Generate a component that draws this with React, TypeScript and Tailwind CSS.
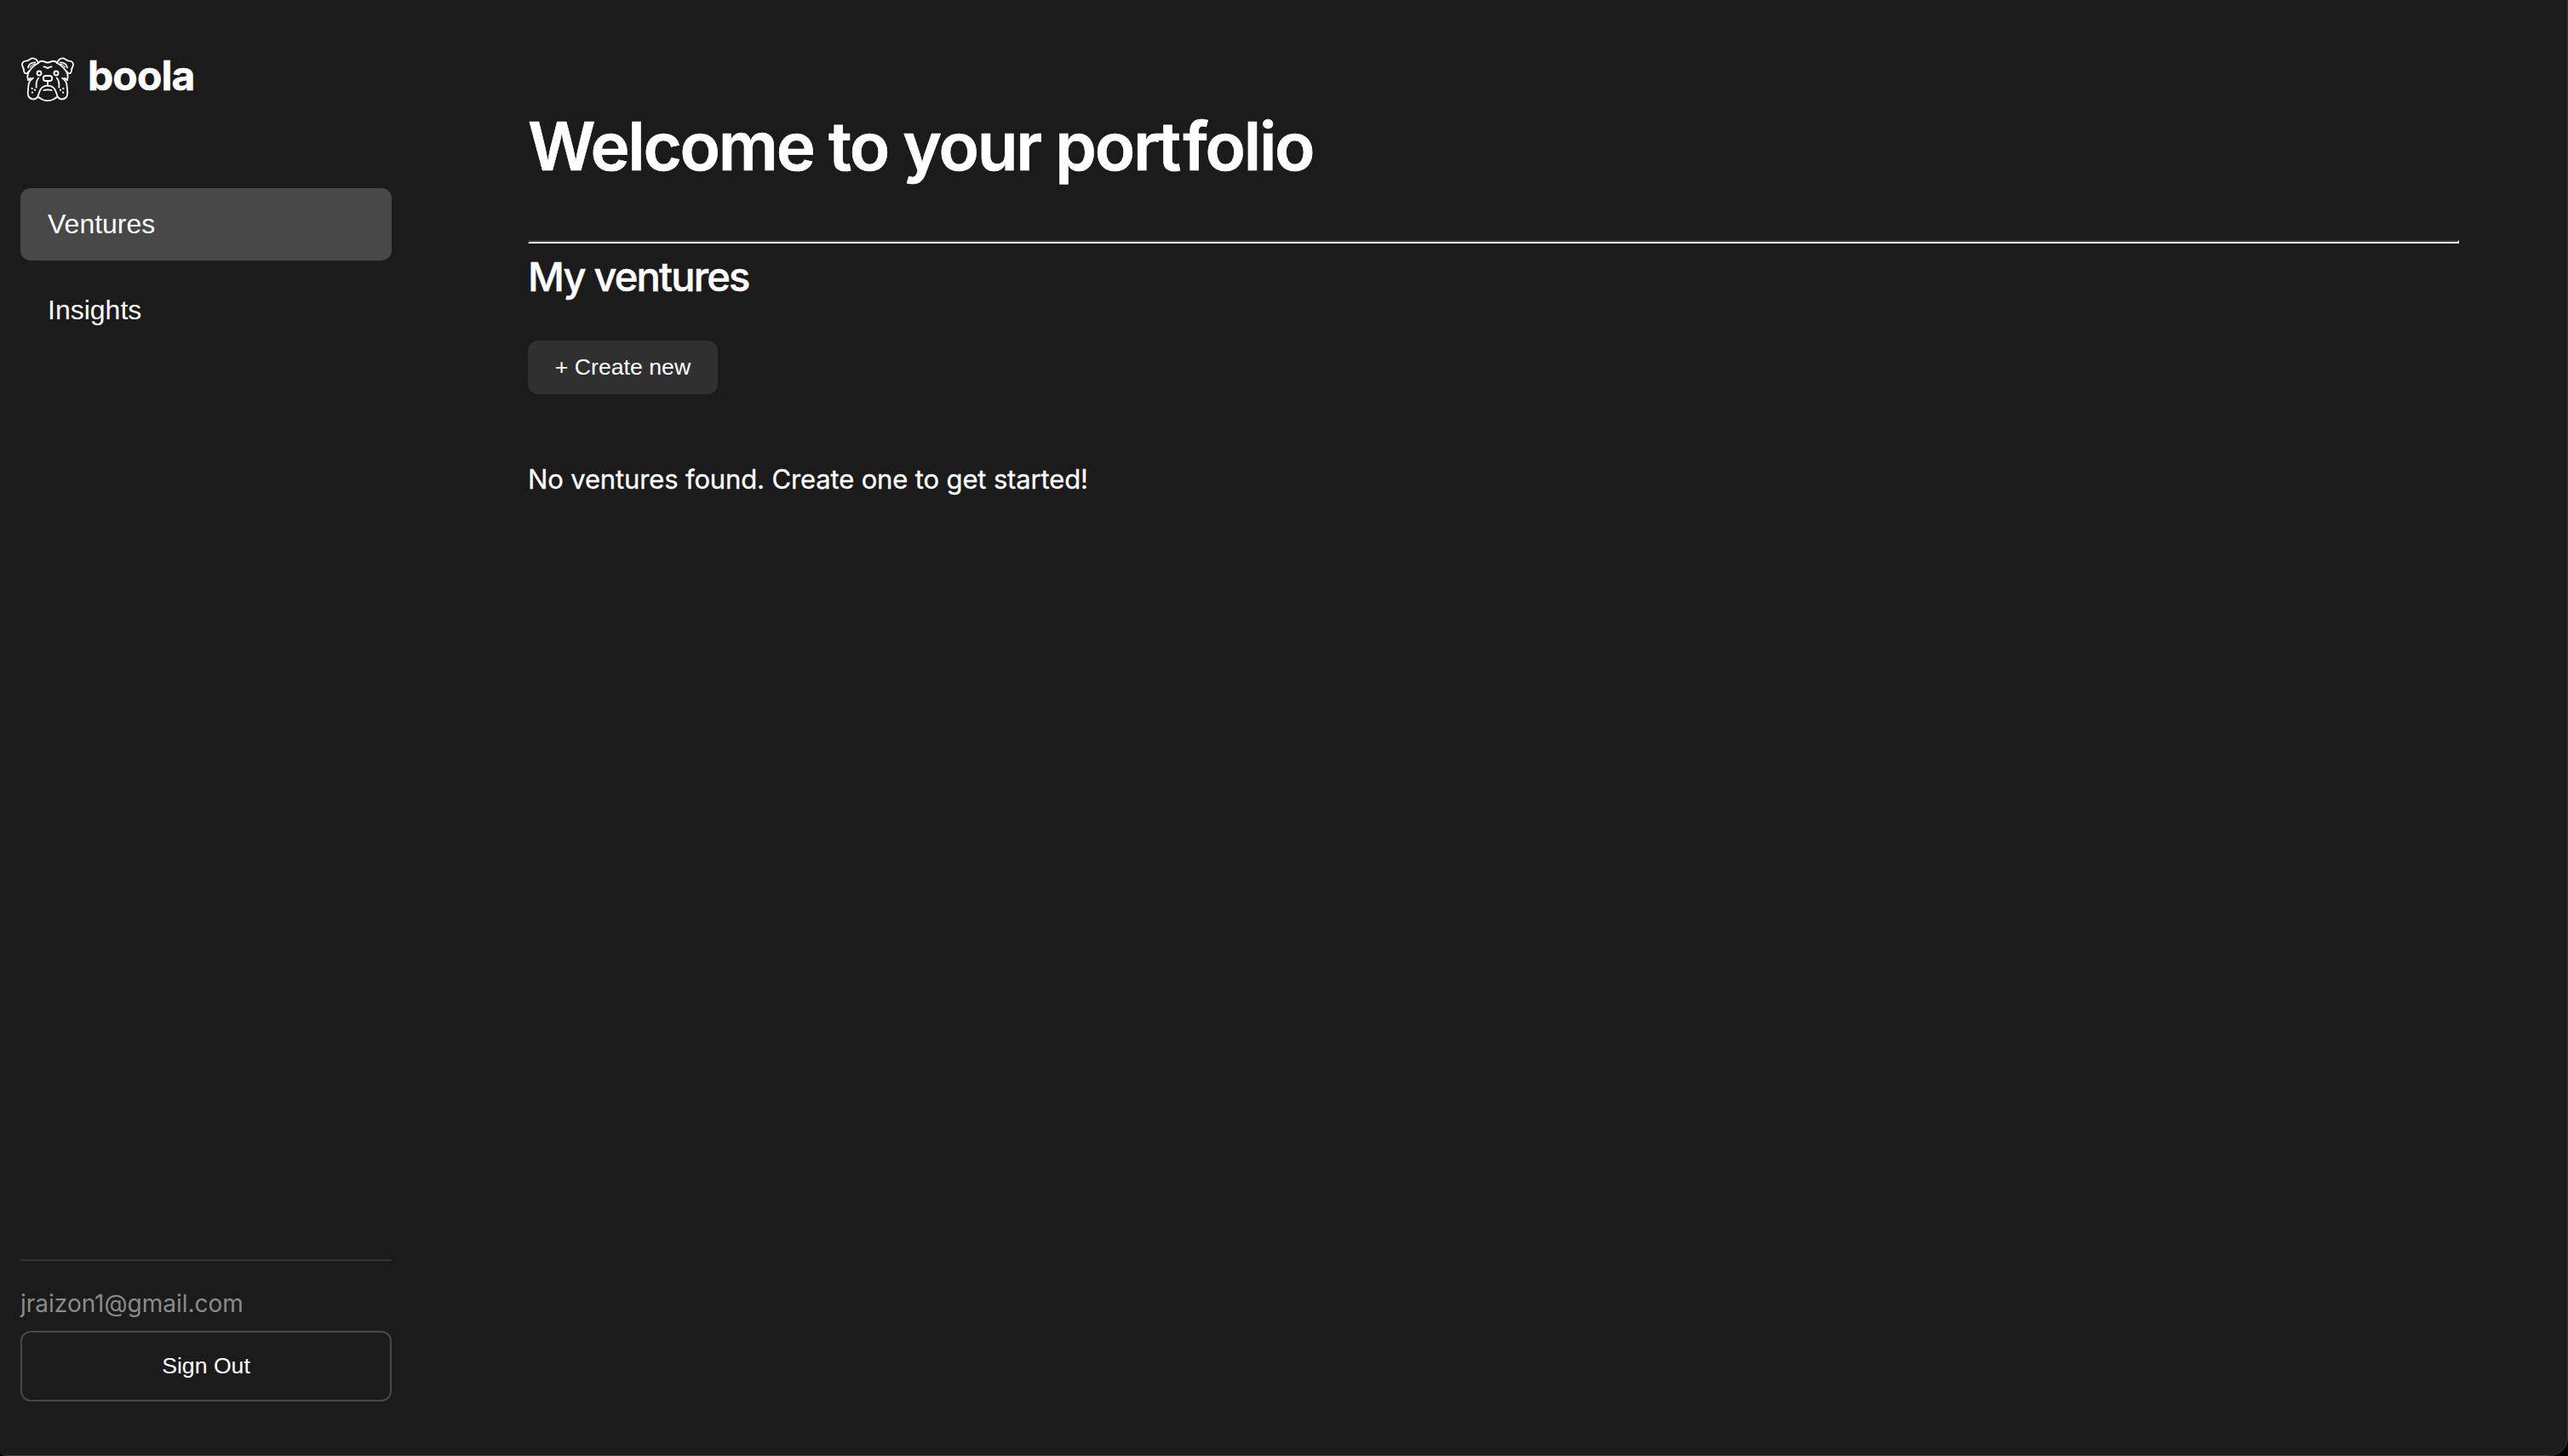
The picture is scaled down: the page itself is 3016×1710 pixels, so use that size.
function Bulldog() {
  return (
    <svg
      viewBox="0 0 240 216"
      className="h-[72px] w-20 shrink-0"
      fill="none"
      stroke="white"
      strokeWidth="5.4"
      strokeLinecap="round"
      strokeLinejoin="round"
    >
      {/* skull */}
      <path d="M87 53C94 46 104 47 110 50Q120 55 130 50C136 47 146 46 153 53" />
      {/* one half of the face, mirrored for the other */}
      {[undefined, "translate(240 0) scale(-1 1)"].map((t, i) => (
        <g key={i} transform={t}>
          <path d="M87 54C84 44 75 36 66 37C58 38 55 44 48 46C40 46 31 50 30 58C29 66 36 71 36 79C36 86 39 91 44 91C49 91 51 84 56 81" />
          <path d="M87 54C72 62 56 76 50 94Q47 102 51 114" />
          <path d="M51 70Q54 52 76 52" />
          <path d="M58 69Q64 59 78 57" strokeWidth="3.4" />
          <path d="M69 107Q52 116 52 138C51 151 48 161 52 170C57 184 77 185 84 174C90 165 89 135 119 134" />
          <path d="M51 114L60 107" />
          <circle cx="90" cy="90" r="7.5" />
          <path d="M88 107Q78 117 80 140" />
          <path d="M106 67Q112 66 120 72" />
          <g fill="white" stroke="none">
            <circle cx="65" cy="144" r="3.4" />
            <circle cx="75" cy="149" r="3.4" />
            <circle cx="66" cy="158" r="3.4" />
          </g>
        </g>
      ))}
      <rect x="104.5" y="99" width="31" height="18" rx="8.5" />
      <path d="M120 117V133" />
      <path d="M106 150Q120 146 134 150" />
      <path d="M85 174Q91 175 96 180Q120 194 144 180Q149 175 155 174" />
    </svg>
  );
}

export default function App() {
  return (
    <div className="h-[1710px] w-full bg-black">
      <div className="flex h-full w-full rounded-br-[22px] rounded-bl-[7px] border-r border-b border-[#383838] bg-[#1b1b1b] font-[Inter,sans-serif] text-white">
        <aside className="flex w-[484px] shrink-0 flex-col px-6 pt-14 pb-[63px]">
          <div className="-ml-2 flex h-[72px] items-center">
            <Bulldog />
            <span className="ml-[7px] -mt-[6px] text-[48px] leading-[56px] font-bold tracking-[-0.9px] [-webkit-text-stroke:0.5px_white]">
              boola
            </span>
          </div>
          <nav className="mt-[93px] flex flex-col gap-4 font-['Liberation_Sans',sans-serif] text-[32px] leading-[37px]">
            <a className="flex h-[85px] items-center rounded-xl bg-[#484848] px-8">Ventures</a>
            <a className="flex h-[85px] items-center rounded-xl px-8">Insights</a>
          </nav>
          <div className="mt-auto border-t-2 border-[#303030] pt-[33px]">
            <p className="text-[28px] leading-[34px] text-[#8a8a8a]">jraizon1@gmail.com</p>
            <button className="mt-[15px] flex h-[83px] w-full items-center justify-center rounded-xl border-2 border-[#484848] pb-[2px] font-['Liberation_Sans',sans-serif] text-[26.67px]">
              Sign Out
            </button>
          </div>
        </aside>
        <main className="w-[2404px] pt-[125px] pl-[136px]">
          <h1 className="text-[78px] leading-[94px] font-semibold tracking-[-2.25px] [-webkit-text-stroke:0.6px_white]">
            Welcome to your por<span className="tracking-[2px]">t</span>folio
          </h1>
          <div className="mt-[63px] border-2 border-t-[#393939] border-r-[#eeeeee] border-b-[#eeeeee] border-l-[#393939]" />
          <h2 className="mt-[10px] text-[47px] leading-[58px] font-medium tracking-[-1.8px] [-webkit-text-stroke:0.5px_white]">
            My ventures
          </h2>
          <button className="mt-[46px] flex h-[63px] w-[223px] items-center justify-center rounded-xl bg-[#303030] pb-[2px] font-['Liberation_Sans',sans-serif] text-[26.67px]">
            + Create new
          </button>
          <p className="mt-20 text-[31px] leading-[40px] tracking-[-0.14px] [-webkit-text-stroke:0.3px_white]">
            No ventures found. Create one to get started!
          </p>
        </main>
      </div>
    </div>
  );
}
